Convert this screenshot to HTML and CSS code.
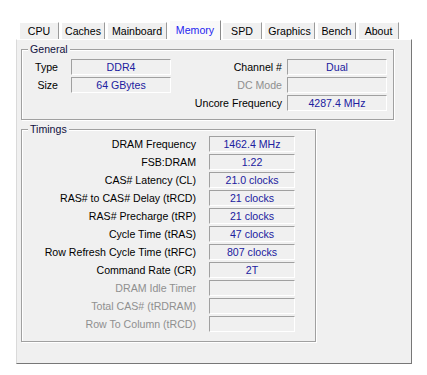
FILE: index.html
```html
<!DOCTYPE html>
<html>
<head>
<meta charset="utf-8">
<link rel="stylesheet" href="styles.css">
</head>
<body>
<div class="app">
  <div class="tabs">
    <div class="tab t-cpu">CPU</div>
    <div class="tab t-caches">Caches</div>
    <div class="tab t-main">Mainboard</div>
    <div class="tab t-mem active">Memory</div>
    <div class="tab t-spd">SPD</div>
    <div class="tab t-gfx">Graphics</div>
    <div class="tab t-bench">Bench</div>
    <div class="tab t-about">About</div>
  </div>
  <div class="panel">
    <fieldset class="group general">
      <legend>General</legend>
      <div class="general-grid">
        <span class="lbl lbl-a">Type</span><span class="val">DDR4</span>
        <span class="lbl lbl-b">Channel #</span><span class="val">Dual</span>
        <span class="lbl lbl-a">Size</span><span class="val">64 GBytes</span>
        <span class="lbl lbl-b dis">DC Mode</span><span class="val"></span>
        <span></span><span></span>
        <span class="lbl lbl-b">Uncore Frequency</span><span class="val">4287.4 MHz</span>
      </div>
    </fieldset>
    <fieldset class="group timings">
      <legend>Timings</legend>
      <div class="timings-grid">
        <span class="lbl">DRAM Frequency</span><span class="val">1462.4 MHz</span>
        <span class="lbl">FSB:DRAM</span><span class="val">1:22</span>
        <span class="lbl">CAS# Latency (CL)</span><span class="val">21.0 clocks</span>
        <span class="lbl">RAS# to CAS# Delay (tRCD)</span><span class="val">21 clocks</span>
        <span class="lbl">RAS# Precharge (tRP)</span><span class="val">21 clocks</span>
        <span class="lbl">Cycle Time (tRAS)</span><span class="val">47 clocks</span>
        <span class="lbl">Row Refresh Cycle Time (tRFC)</span><span class="val">807 clocks</span>
        <span class="lbl">Command Rate (CR)</span><span class="val">2T</span>
        <span class="lbl dis">DRAM Idle Timer</span><span class="val"></span>
        <span class="lbl dis">Total CAS# (tRDRAM)</span><span class="val"></span>
        <span class="lbl dis">Row To Column (tRCD)</span><span class="val"></span>
      </div>
    </fieldset>
  </div>
</div>
</body>
</html>
```

FILE: styles.css
```css
html, body {
  margin: 0;
  padding: 0;
  background: #ffffff;
}
body {
  font-family: "Liberation Sans", Arial, sans-serif;
  font-size: 10.6px;
  color: #000;
}
.app {
  margin: 20px 0 0 16px;
  width: 396px;
}
.tabs {
  display: flex;
  align-items: flex-end;
  height: 19px;
  padding-left: 3px;
}
.tab {
  box-sizing: border-box;
  height: 17px;
  line-height: 16px;
  text-align: center;
  background: #f0f0f0;
  border-top: 1px solid #ffffff;
  border-left: 1px solid #ffffff;
  border-right: 1px solid #9a9a9a;
  margin-right: 2px;
  white-space: nowrap;
}
.tab.active {
  position: relative;
  top: 1px;
  z-index: 1;
  height: 20px;
  padding-top: 1px;
  background: #f9f9f9;
  color: #1e1ef0;
  border-left: 1px solid #ffffff;
  border-top: 1px solid #ffffff;
  border-right: 1px solid #8a8a8a;
  margin-right: 1px;
}
.t-cpu { width: 40px; }
.t-caches { width: 44px; }
.t-main { width: 60px; }
.t-mem { width: 52px; }
.t-spd { width: 40px; }
.t-gfx { width: 51px; }
.t-bench { width: 39px; }
.t-about { width: 41px; }

.panel {
  box-sizing: border-box;
  height: 325px;
  background: #f0f0f0;
  border-top: 1px solid #ffffff;
  border-left: 1px solid #dadada;
  border-right: 1px solid #777777;
  border-bottom: 1px solid #777777;
  padding: 3px 0 0 4px;
}
.group {
  box-sizing: border-box;
  margin: 0;
  min-inline-size: 0;
  border: 1px solid #a0a0a0;
  box-shadow: inset 1px 1px 0 #ffffff, 1px 1px 0 #ffffff;
}
.group legend {
  margin-left: 6px;
  padding: 0 2px;
  line-height: 13px;
  background: #f0f0f0;
  color: #101040;
}
.general {
  width: 373px;
  padding: 3px 6px 8px 0;
}
.timings {
  width: 295px;
  margin-top: 3px;
  padding: 0 0 9px 0;
}
.general-grid {
  display: grid;
  grid-template-columns: 49px 100px 1fr 100px;
  grid-auto-rows: 16px;
  row-gap: 2px;
}
.timings-grid {
  display: grid;
  grid-template-columns: 187px 86px;
  grid-auto-rows: 16px;
  row-gap: 2px;
}
.lbl {
  line-height: 16px;
  text-align: right;
  white-space: nowrap;
}
.lbl-a { padding-right: 13px; }
.lbl-b { padding-right: 5px; }
.timings-grid .lbl { padding-right: 13px; }
.dis { color: #8f8f8f; }
.val {
  box-sizing: border-box;
  height: 16px;
  line-height: 14px;
  text-align: center;
  color: #20209f;
  border-top: 1px solid #a0a0a0;
  border-left: 1px solid #a0a0a0;
  border-right: 1px solid #ffffff;
  border-bottom: 1px solid #ffffff;
  white-space: nowrap;
}
```
